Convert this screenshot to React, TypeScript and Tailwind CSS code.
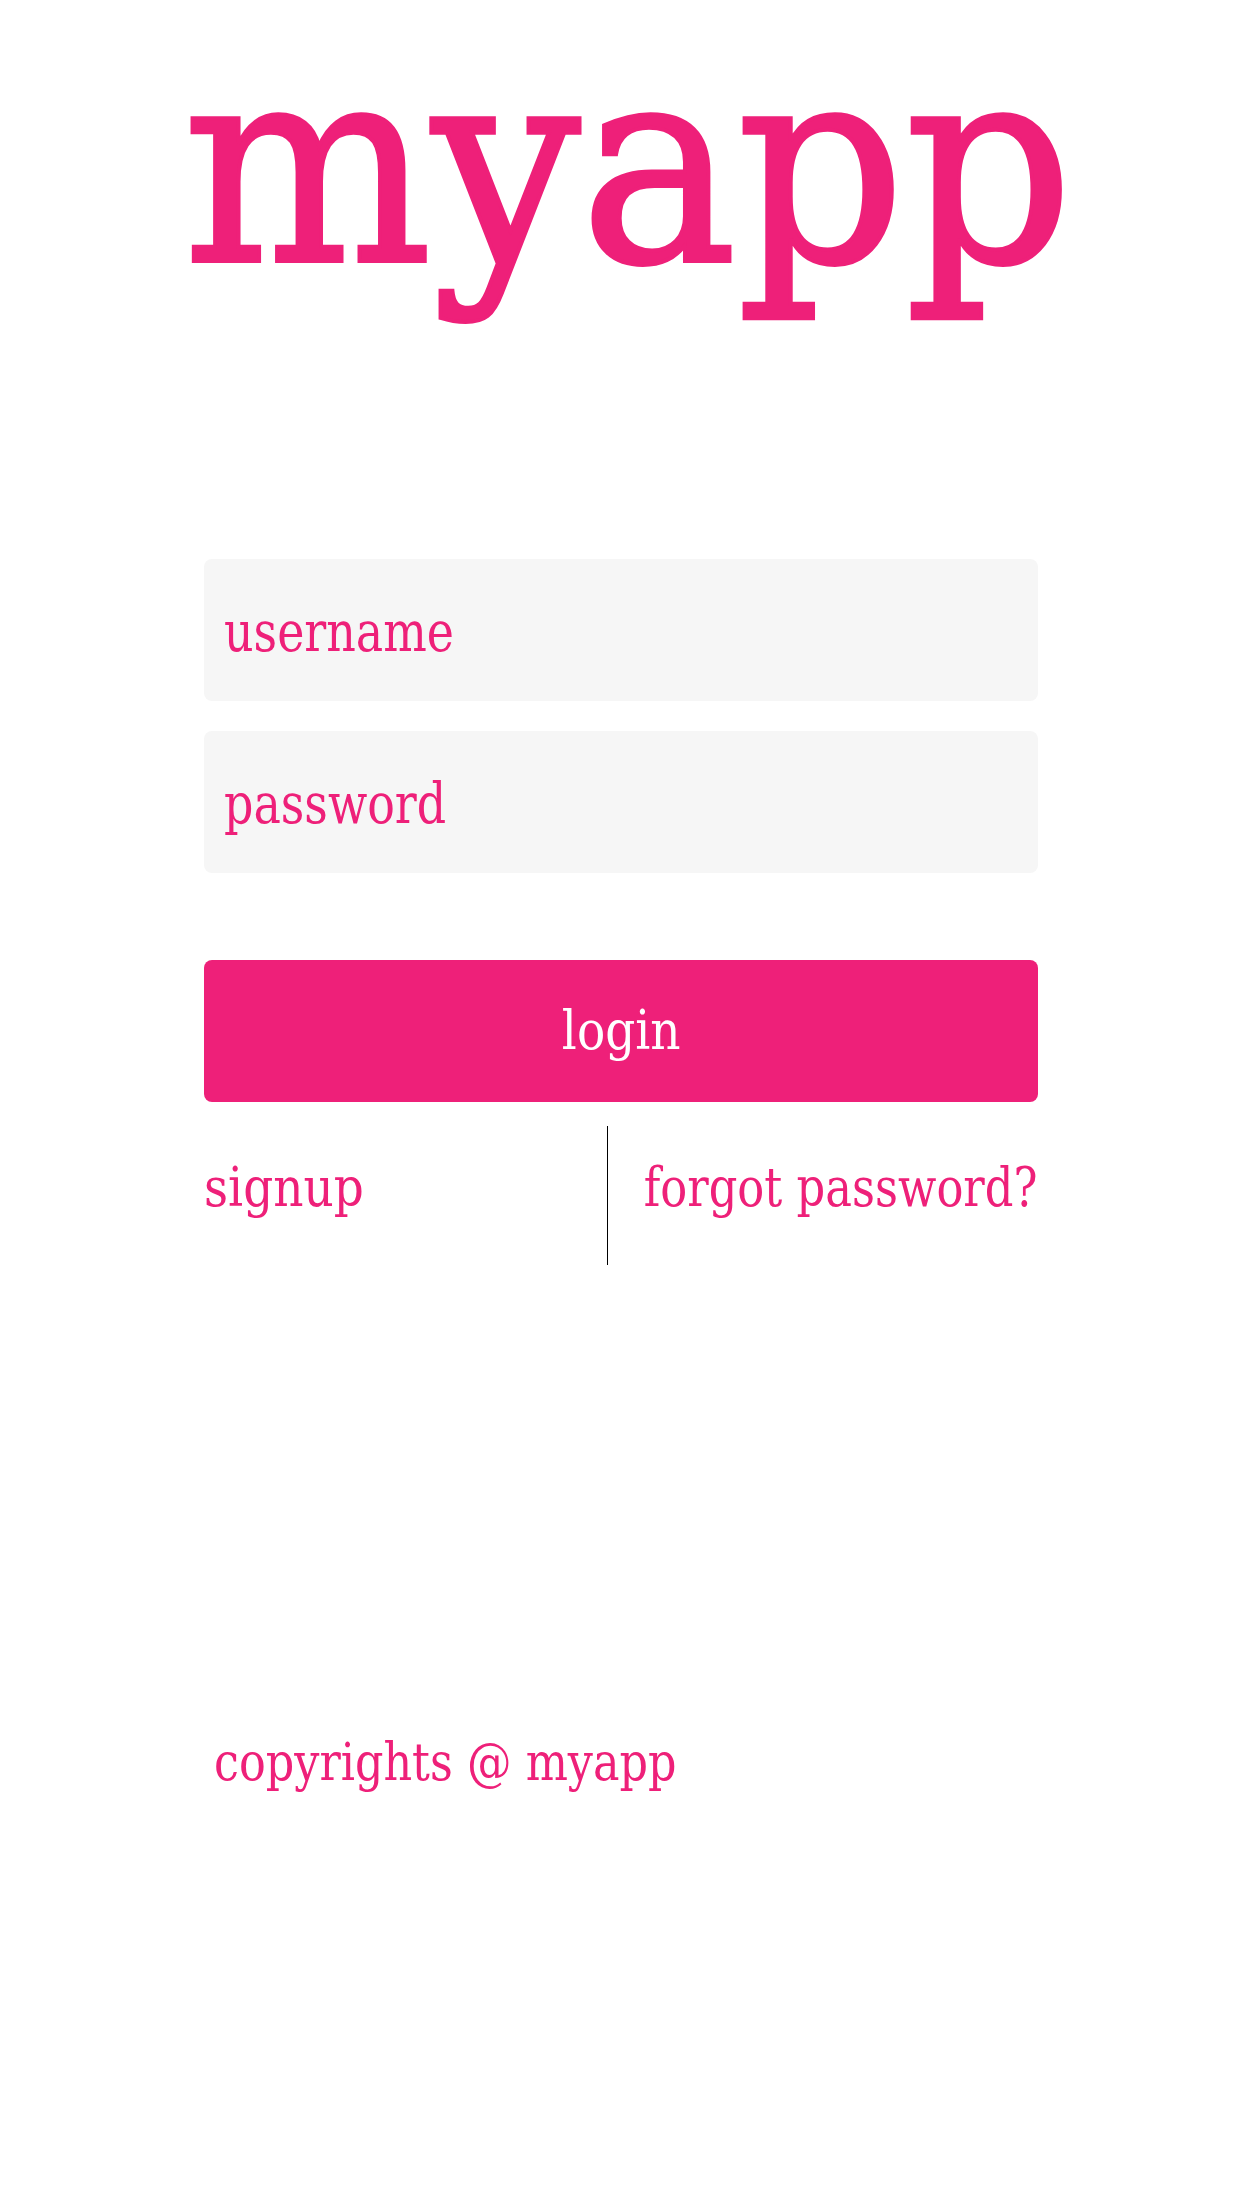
import React from "react"

const font = "font-['DejaVu_Serif',serif]"

function Field({ label }: { label: string }) {
  return (
    <div className="flex h-[142px] items-center rounded-lg bg-[#f6f6f6] pl-5 pt-1">
      <span className={`${font} inline-block origin-left scale-x-[0.82] whitespace-nowrap text-[56px] leading-none text-[#ee2079]`}>
        {label}
      </span>
    </div>
  )
}

export default function App() {
  return (
    <div className="h-[2208px] w-[1242px] bg-white">
      <header className="h-[306px] pl-[14px] pt-[29px] text-center">
        <span
          className={`${font} inline-block scale-x-[0.955] text-[275px] leading-none text-[#ee2079] [-webkit-text-stroke:4px_#ee2079]`}
        >
          myapp
        </span>
      </header>

      <main className="mx-auto mt-[253px] flex w-[834px] flex-col">
        <div className="flex flex-col gap-[30px]">
          <Field label="username" />
          <Field label="password" />
        </div>

        <button className="mt-[87px] flex h-[142px] items-center justify-center rounded-lg bg-[#ee2079]">
          <span className={`${font} inline-block scale-x-[0.87] text-[54px] leading-none text-white`}>login</span>
        </button>

        <div className="mt-[24px] flex h-[139px]">
          <div className="w-[403px] shrink-0 pt-[35px]">
            <span className={`${font} inline-block origin-left scale-x-[0.87] text-[54px] leading-none text-[#ee2079]`}>
              signup
            </span>
          </div>
          <div className="w-px shrink-0 bg-black" />
          <div className="flex min-w-0 flex-1 justify-end pt-[35px]">
            <span
              className={`${font} inline-block shrink-0 origin-right scale-x-[0.83] whitespace-nowrap text-[54px] leading-none text-[#ee2079]`}
            >
              forgot password?
            </span>
          </div>
        </div>
      </main>

      <footer className="ml-[214px] mt-[470px]">
        <span className={`${font} inline-block origin-left scale-x-[0.84] whitespace-nowrap text-[53px] leading-none text-[#ee2079]`}>
          copyrights @ myapp
        </span>
      </footer>
    </div>
  )
}
